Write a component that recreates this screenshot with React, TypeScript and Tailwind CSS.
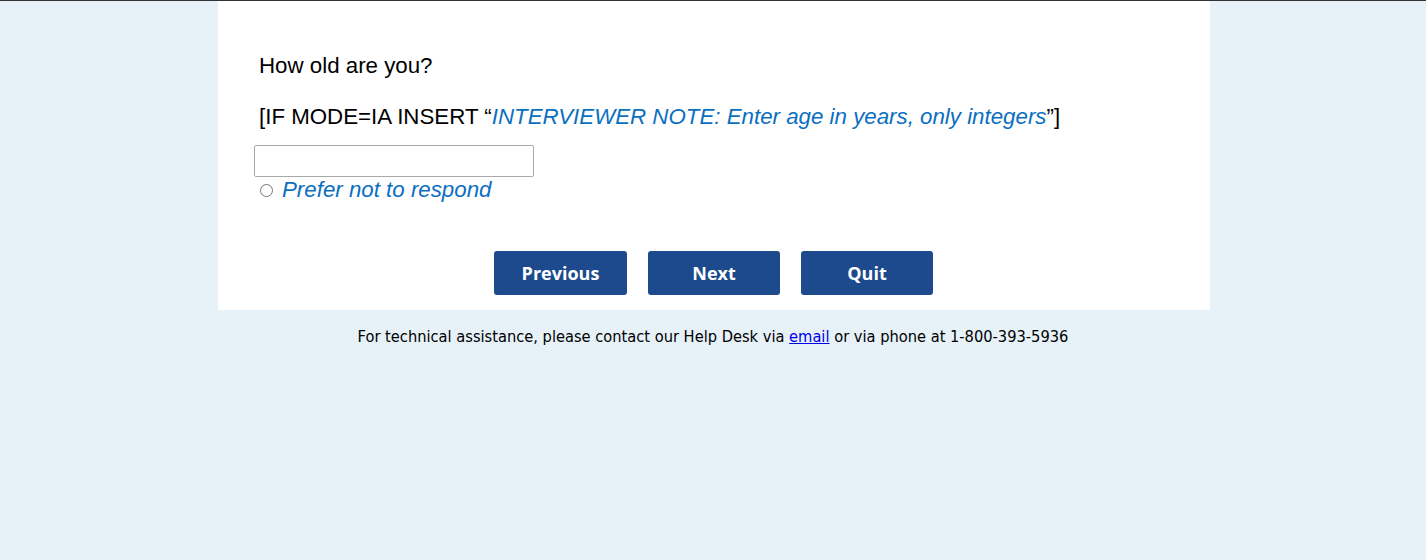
import React from "react";

export default function App() {
  return (
    <div className="min-h-[560px] w-full bg-[#e6f1f8] border-t border-[#333333]">
      <div className="ml-[218px] w-[992px] bg-white pl-[41px] pt-[51px] pb-[15px]">
        <div className="font-['Liberation_Sans',Arial,sans-serif] text-[22.3px] leading-[28px] text-black">
          <p>How old are you?</p>
          <p className="mt-[23px]">
            [IF MODE=IA INSERT “<span className="italic text-[#0b6fc1]">INTERVIEWER NOTE: Enter age in years, only integers</span>”]
          </p>
          <input
            type="text"
            className="mt-[14px] ml-[-5px] block h-[32px] w-[280px] rounded-[2px] border border-[#a9a9a9] bg-white"
          />
          <label className="mt-[-1px] flex items-center">
            <span className="ml-[1px] inline-block h-[13px] w-[13px] rounded-full border border-[#767676] bg-white" />
            <span className="ml-[9px] italic text-[#0b6fc1]">Prefer not to respond</span>
          </label>
        </div>
        <div className="mt-[47px] flex justify-center gap-[21px] pr-[42px] font-['Open_Sans',sans-serif] text-[18px] font-bold text-white">
          <button className="h-[44px] w-[133px] rounded-[3px] bg-[#1d4a8c]">Previous</button>
          <button className="h-[44px] w-[132px] rounded-[3px] bg-[#1d4a8c]">Next</button>
          <button className="h-[44px] w-[132px] rounded-[3px] bg-[#1d4a8c]">Quit</button>
        </div>
      </div>
      <p className="mt-[16px] text-center font-['DejaVu_Sans_Condensed','DejaVu_Sans',sans-serif] text-[16.3px] leading-[22px] text-black">
        For technical assistance, please contact our Help Desk via{" "}
        <a href="#" className="text-[#0000ee] underline">email</a> or via phone at 1-800-393-5936
      </p>
    </div>
  );
}
